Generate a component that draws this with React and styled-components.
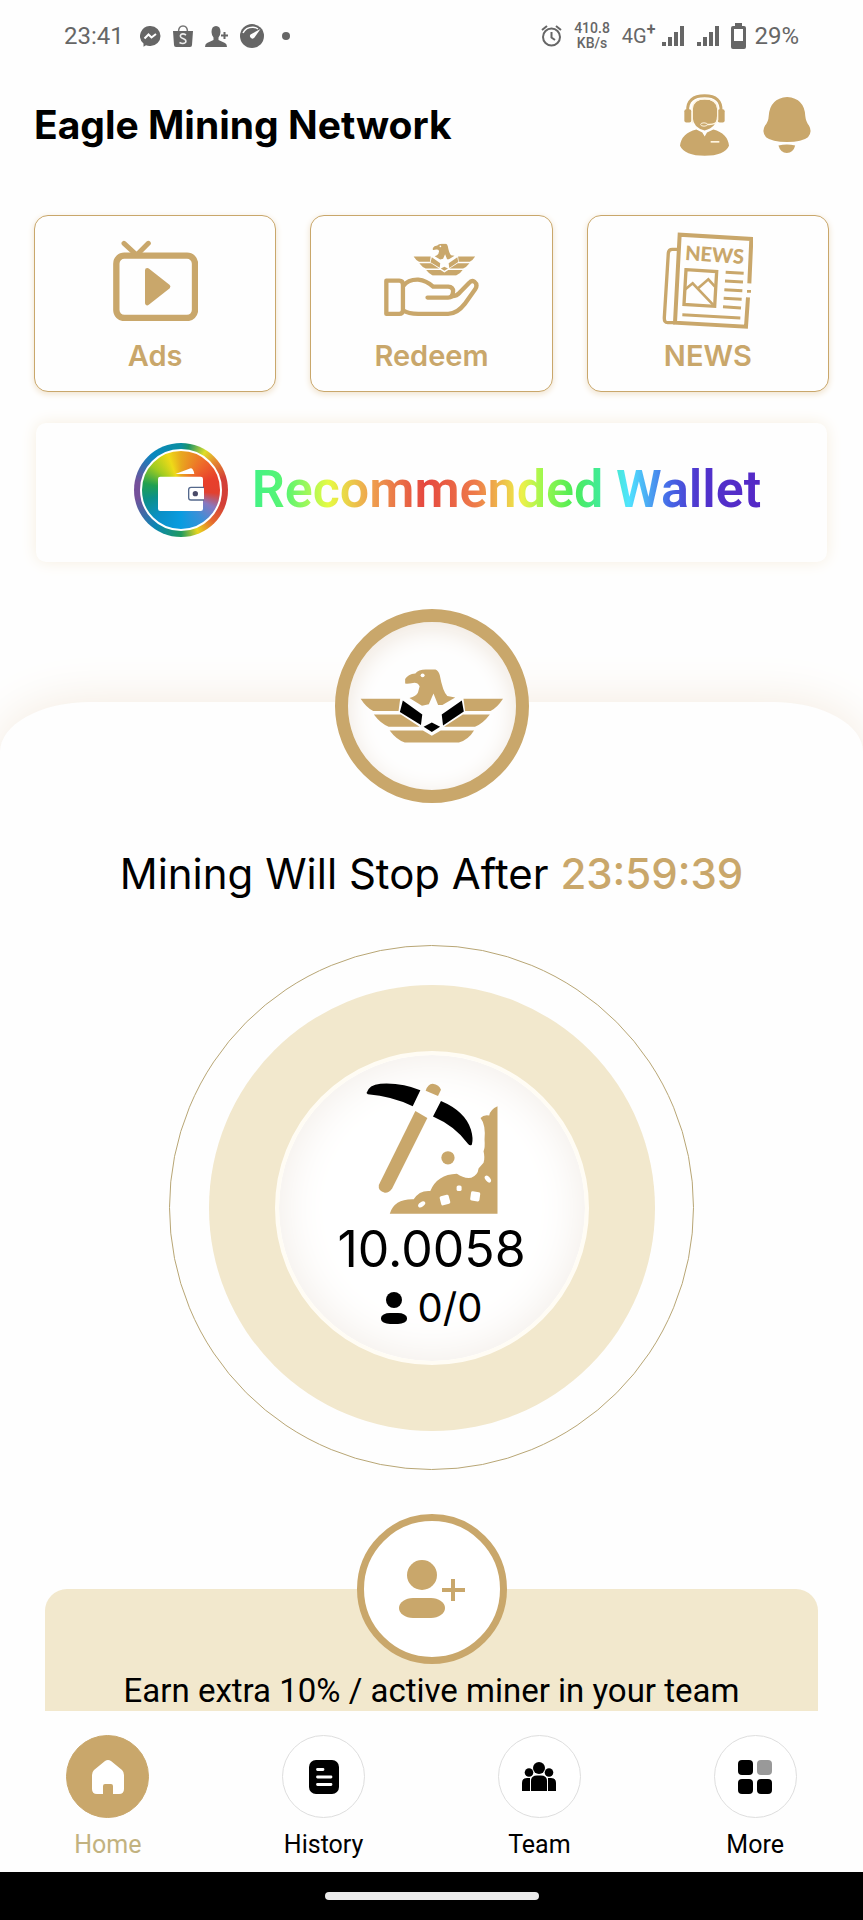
import styled, { createGlobalStyle } from "styled-components";

const App = () => {
    return (
        <Page>
            <GlobalStyle />
            <StatusBar>
                <StatusSide>
                    <span>23:41</span>
                    <StatusApps>
                        <MessengerIcon />
                        <BagIcon />
                        <PersonAddIcon />
                        <GaugeIcon />
                        <Dot />
                    </StatusApps>
                </StatusSide>
                <StatusSide>
                    <AlarmIcon />
                    <Speed>410.8<br />KB/s</Speed>
                    <Network>
                        <NetworkType>4G<sup>+</sup></NetworkType>
                        <Signals>
                            <SignalIcon />
                            <SignalIcon />
                        </Signals>
                    </Network>
                    <Battery>
                        <BatteryIcon />
                        29%
                    </Battery>
                </StatusSide>
            </StatusBar>

            <Content>
                <Header>
                    <Title>Eagle Mining Network</Title>
                    <HeaderButtons>
                        <IconButton aria-label="Support"><SupportIcon /></IconButton>
                        <IconButton aria-label="Notifications"><BellIcon /></IconButton>
                    </HeaderButtons>
                </Header>

                <Shortcuts>
                    <Shortcut><IconBox><TvIcon /></IconBox>Ads</Shortcut>
                    <Shortcut><IconBox><RedeemIcon /></IconBox>Redeem</Shortcut>
                    <Shortcut><IconBox><NewsIcon /></IconBox>NEWS</Shortcut>
                </Shortcuts>

                <WalletBanner href="#wallet">
                    <WalletRing>
                        <WalletDisc><WalletIcon /></WalletDisc>
                    </WalletRing>
                    <WalletText>Recommended Wallet</WalletText>
                </WalletBanner>

                <Sheet>
                    <EagleBadge><EagleIcon width="144" height="76" accent="#000" /></EagleBadge>
                    <Countdown>Mining Will Stop After <Timer>23:59:39</Timer></Countdown>
                    <OuterRing>
                        <MiddleRing>
                            <Core>
                                <PickaxeIcon />
                                <Balance>10.0058</Balance>
                                <Miners><MinerIcon />0/0</Miners>
                            </Core>
                        </MiddleRing>
                    </OuterRing>
                    <TeamCard>
                        <TeamBadge><InviteIcon /></TeamBadge>
                        <TeamText>Earn extra 10% / active miner in your team</TeamText>
                    </TeamCard>
                </Sheet>
            </Content>

            <TabBar>
                <Tab href="#home" $active><TabCircle $active><HomeIcon /></TabCircle>Home</Tab>
                <Tab href="#history"><TabCircle><HistoryIcon /></TabCircle>History</Tab>
                <Tab href="#team"><TabCircle><TeamIcon /></TabCircle>Team</Tab>
                <Tab href="#more"><TabCircle><MoreIcon /></TabCircle>More</Tab>
            </TabBar>
            <GestureBar><GesturePill /></GestureBar>
        </Page>
    )
}

// Status bar icons
const MessengerIcon = () => (
    <svg width="21" height="21" viewBox="0 0 21 21">
        <path fill="#666" d="M10.500 0A10 10 0 0 1 10.500 20Q8 20.200 6 19.300L3.500 20.700V17.500A10 10 0 0 1 10.500 0Z" />
        <path fill="none" stroke="#fff" strokeWidth="2" d="M4.500 12.500L8.500 8.500L11.500 11.500L16 8" />
    </svg>
)

const BagIcon = () => (
    <svg width="20" height="22" viewBox="0 0 20 22">
        <path fill="none" stroke="#777" strokeWidth="1.500" d="M5.500 7Q5.500 1 10 1Q14.500 1 14.500 7" />
        <path fill="#666" d="M0 6H20L19 20Q19 22 17 22H3Q1 22 1 20Z" />
        <path fill="none" stroke="#eee" strokeWidth="1.600" d="M13 10Q10 8 8 9.500Q6 12 10 13.500Q14 15 12.500 17.500Q10 19.500 6.500 17.500" />
    </svg>
)

const PersonAddIcon = () => (
    <svg width="23" height="21" viewBox="0 0 23 21">
        <path fill="#666" d="M11 0Q15.500 0 15.500 6Q15.500 9 13.500 11.500V14L20 17Q22 18 22 21H0Q0 18 2 17L8.500 14V11.500Q6.500 9 6.500 6Q6.500 0 11 0Z" />
        <path stroke="#666" strokeWidth="2" d="M19.500 6V13M16 9.500H23" />
    </svg>
)

const GaugeIcon = () => (
    <svg width="24" height="24" viewBox="0 0 24 24">
        <circle cx="12" cy="12" r="12" fill="#666" />
        <path fill="none" stroke="#fff" strokeWidth="1.500" d="M3 9Q6 3 13 3.200Q16 3.500 18 5" />
        <path fill="#fff" d="M20.500 5L14.500 13.500A2.500 2.500 0 1 1 10.500 10.500Z" />
    </svg>
)

const AlarmIcon = () => (
    <svg width="21" height="22" viewBox="0 0 21 22" fill="none" stroke="#666" strokeWidth="2">
        <circle cx="10.500" cy="12" r="8.500" />
        <path d="M10.500 7V12.500L14 15M1 5L6 1M15 1L20 5" />
    </svg>
)

const SignalIcon = () => (
    <svg width="22" height="20" viewBox="0 0 22 20" fill="#666">
        <path d="M0 16H4V20H0ZM6 11H10V20H6ZM12 6H16V20H12ZM18 0H22V20H18Z" />
    </svg>
)

const BatteryIcon = () => (
    <svg width="15" height="26" viewBox="0 0 15 26">
        <path fill="#666" d="M4 0H11V3H13Q15 3 15 5V24Q15 26 13 26H2Q0 26 0 24V5Q0 3 2 3H4Z" />
        <path fill="#fff" d="M3 6H12V18H3Z" />
    </svg>
)

// Header icons
const SupportIcon = () => (
    <svg width="49" height="62" viewBox="748 275 147 185">
        <path fill="none" stroke="#c9a76b" strokeWidth="9" d="M771 325Q769 280 822 280Q873 280 871 325" />
        <rect x="761" y="320" width="21" height="40" rx="6" fill="#c9a76b" />
        <rect x="861" y="320" width="21" height="40" rx="6" fill="#c9a76b" />
        <path fill="#c9a76b" d="M786 318Q788 291 822 291Q856 291 859 318V340Q858 376 822 384Q788 376 786 345Z" />
        <path fill="none" stroke="#fff5e0" strokeWidth="4" d="M785 362V318Q788 289 822 289Q858 289 861 318V352Q858 365 835 366H828" />
        <ellipse cx="820" cy="366" rx="10" ry="5" fill="#c9a76b" stroke="#fff5e0" strokeWidth="3" />
        <path fill="#c9a76b" d="M748 430Q752 392 797 381L815 390L822 402L829 390L848 381Q891 392 895 430Q882 460 822 460Q762 460 748 430Z" />
        <path stroke="#fff5e0" strokeWidth="5" d="M840 418H866" />
    </svg>
)

const BellIcon = () => (
    <svg width="48" height="56" viewBox="998 293 143 167" fill="#c9a76b">
        <path d="M1070 293Q1122 297 1124 350Q1126 368 1135 378Q1146 398 1132 413Q1115 427 1070 427Q1024 427 1007 413Q993 398 1004 378Q1014 368 1015 350Q1018 297 1070 293Z" />
        <path d="M1044 438Q1069 432 1094 438Q1088 460 1069 460Q1050 460 1044 438Z" />
    </svg>
)

// The eagle is shared by the badge and the redeem shortcut
const EagleIcon = ({ accent, ...rest }) => (
    <svg viewBox="175 233 437 226" {...rest}>
        <path fill="#c9a76b" d="M312 264Q320 249 343 247Q352 235 375 235H404Q413 238 417 252Q426 302 440 316L464 320L425 343H412L398 308L384 341L363 345L325 322Q346 316 351 305L356 286Q350 274 336 276Q322 279 312 278Z" />
        <circle cx="365" cy="253" r="6" fill="#fff" />
        <path fill="#c9a76b" d="M177 324H297L292 361H215Q195 352 177 324ZM609 324H489L494 361H571Q591 352 609 324Z" />
        <path fill="#c9a76b" d="M217 372H299L356 409H262Q238 400 217 372ZM569 372H487L430 409H524Q548 400 569 372Z" />
        <path fill="#c9a76b" d="M265 420H366L393 436L420 420H521Q505 447 475 457H311Q285 447 265 420Z" />
        <path fill={accent} d="M305 329L364 372L360 404L296 364ZM484 329L490 363L427 405L423 372ZM393 396L418 409L393 425L368 409Z" />
    </svg>
)

// Shortcut icons
const TvIcon = () => (
    <svg width="85" height="81" viewBox="337 120 255 243" stroke="#c9a76b" strokeLinecap="round" strokeLinejoin="round">
        <rect x="347" y="167" width="236" height="187" rx="24" fill="none" strokeWidth="19" />
        <path fill="none" strokeWidth="15" d="M370 130L408 165L443 130" />
        <path fill="#c9a76b" strokeWidth="14" d="M440 211L502 260L440 309Z" />
    </svg>
)

const RedeemIcon = () => (
    <svg width="95" height="74" viewBox="42 37 286 222">
        <EagleIcon x="130" y="38" width="188" height="97" accent="#c9a76b" />
        <g fill="none" stroke="#c9a76b" strokeWidth="13" strokeLinecap="round" strokeLinejoin="round">
            <path d="M49 150H88Q99 150 99 162V238Q99 250 88 250H49Z" />
            <path d="M100 166Q115 146 145 147Q170 150 190 168H235Q250 169 250 182Q249 201 235 201H173" />
            <path d="M246 197Q262 196 270 186L298 157Q306 147 314 153Q325 162 317 175L285 220Q262 250 235 250H145Q115 250 100 240" />
        </g>
    </svg>
)

const NewsIcon = () => (
    <svg width="91" height="97" viewBox="697 94 273 291" fill="none" stroke="#c9a76b">
        <path strokeWidth="12" d="M959 248L965 115L750 102L736 366L949 378L955 290M958 268V276" />
        <path strokeWidth="10" d="M744 146H728Q717 146 716 157L704 350Q703 366 714 366H736" />
        <text x="765" y="178" transform="rotate(4 765 178)" fill="#c9a76b" stroke="none" fontFamily="Lato, Roboto, sans-serif" fontWeight="900" fontSize="60">NEWS</text>
        <path strokeWidth="10" d="M769 207L861 213L855 317L763 311Z" />
        <path strokeWidth="8" d="M767 266L789 248L850 312M806 262L836 236L856 258" />
        <path strokeWidth="9" d="M888 215L942 218M886 241L940 244M884 267L938 270M882 293L936 296M880 318L934 322M758 342L932 352" />
    </svg>
)

const WalletIcon = () => (
    <svg width="46" height="43" viewBox="108 111 138 129">
        <path fill="#fff" d="M160 129L206 112Q214 112 217 129Z" />
        <rect x="108" y="137" width="135" height="103" rx="7" fill="#fff" />
        <rect x="200" y="169" width="50" height="38" rx="7" fill="#fff" stroke="#54688c" strokeWidth="4" />
        <circle cx="220" cy="188" r="8" fill="#4a4a68" />
    </svg>
)

const PickaxeIcon = () => (
    <svg width="132" height="131" viewBox="102 95 396 394">
        <path d="M103 125Q110 100 145 97Q210 93 265 117L242 165Q180 135 107 129Z" />
        <path d="M327 149Q400 180 417 235Q425 262 420 280Q415 286 408 278Q370 225 303 196Z" />
        <g fill="#c9a76b">
            <path d="M281 118Q287 98 302 97Q322 100 327 115L318 134Z" />
            <path d="M250 179L286 200L180 412Q170 426 158 425Q137 420 140 402Z" />
            <circle cx="348" cy="320" r="20" />
            <path d="M497 165V488H173Q187 443 245 445Q262 417 295 420Q315 370 375 368Q395 383 418 380Q438 372 440 352L455 335Q460 320 455 300Q460 290 458 265Q462 220 446 200Q455 190 472 193Q475 175 497 165Z" />
        </g>
        <g fill="#fff">
            <rect x="325" y="433" width="28" height="28" rx="5" transform="rotate(-15 339 447)" />
            <rect x="416" y="422" width="28" height="28" rx="5" transform="rotate(8 430 436)" />
            <rect x="374" y="403" width="15" height="17" rx="5" />
            <ellipse cx="269" cy="460" rx="12" ry="7" transform="rotate(-35 269 460)" />
            <ellipse cx="468" cy="384" rx="12" ry="7" transform="rotate(50 468 384)" />
        </g>
    </svg>
)

const MinerIcon = () => (
    <svg width="26" height="32" viewBox="0 0 26 32">
        <circle cx="13" cy="8" r="8" />
        <rect y="21" width="26" height="11" rx="9" ry="5" />
    </svg>
)

const InviteIcon = () => (
    <svg width="66" height="58" viewBox="0 0 66 58" fill="#c9a76b">
        <circle cx="23" cy="15" r="15" />
        <rect y="38" width="46" height="20" rx="14" ry="10" />
        <path d="M52 19H56V28H66V32H56V41H52V32H43V28H52Z" />
    </svg>
)

// Tab bar icons
const HomeIcon = () => (
    <svg width="32" height="34" viewBox="0 0 32 34">
        <path fill="#fff" d="M13 1Q16 -1 19 1L30 10Q32 12 32 15V29Q32 34 27 34H21V26Q21 24 19 24H13Q11 24 11 26V34H5Q0 34 0 29V15Q0 12 2 10Z" />
    </svg>
)

const HistoryIcon = () => (
    <svg width="30" height="34" viewBox="0 0 30 34">
        <rect width="30" height="34" rx="7" />
        <path stroke="#fff" strokeWidth="2.800" strokeLinecap="round" d="M8.500 9.500H14M8.500 17H22M8.500 24.500H22" />
    </svg>
)

const TeamIcon = () => (
    <svg width="34" height="30" viewBox="0 0 34 30">
        <circle cx="17" cy="6" r="6" />
        <circle cx="7" cy="10.500" r="4.300" />
        <circle cx="27" cy="10.500" r="4.300" />
        <path d="M9 29V19Q9 13.500 15 13.500H19Q25 13.500 25 19V29ZM8 29H0V21Q0 16 5 16H8ZM26 29V16H29Q34 16 34 21V29Z" />
    </svg>
)

const MoreIcon = () => (
    <svg width="34" height="34" viewBox="0 0 34 34">
        <rect width="15" height="15" rx="4" />
        <rect x="19" width="15" height="15" rx="4" fill="#999" />
        <rect y="19" width="15" height="15" rx="4" />
        <rect x="19" y="19" width="15" height="15" rx="4" />
    </svg>
)

const GlobalStyle = createGlobalStyle`
  :root {
    --gold: #c9a76b;
    --cream: #f2e8cd;
    --white: #fefefe;
    --display: Inter, Roboto, sans-serif;
  }
  * {
    box-sizing: border-box;
  }
  body {
    margin: 0;
    background-color: var(--white);
    font-family: Roboto, sans-serif;
  }
  svg {
    display: block;
    flex-shrink: 0;
  }
`

const Page = styled.div`
  display: flex;
  flex-direction: column;
  height: 100vh;
  color: black;
`

const StatusBar = styled.div`
  display: flex;
  justify-content: space-between;
  align-items: center;
  flex-shrink: 0;
  height: 72px;
  padding: 0 64px;
  color: #666;
  font-size: 24px;
`

const StatusSide = styled.div`
  display: flex;
  align-items: center;
  gap: 12px;
`

const StatusApps = styled.div`
  display: flex;
  align-items: center;
  gap: 12px;
  margin-left: 4px;
`

const Dot = styled.span`
  width: 8px;
  height: 8px;
  margin-left: 6px;
  border-radius: 50%;
  background-color: #666;
`

const Speed = styled.span`
  font-size: 14px;
  line-height: 15px;
  font-weight: 500;
  text-align: center;
`

const Network = styled.div`
  display: flex;
  align-items: center;
  gap: 7px;
`

const NetworkType = styled.span`
  font-size: 20px;
  line-height: 24px;
  sup {
    font-size: 16px;
    line-height: 0;
    font-weight: 700;
  }
`

const Signals = styled.div`
  display: flex;
  gap: 13px;
`

const Battery = styled.div`
  display: flex;
  align-items: center;
  gap: 8px;
`

const Content = styled.main`
  flex: 1;
  min-height: 0;
  overflow-x: hidden;
  overflow-y: auto;
  scrollbar-width: none;
`

const Header = styled.header`
  display: flex;
  justify-content: space-between;
  align-items: center;
  height: 106px;
  padding: 0 52px 0 34px;
`

const Title = styled.h1`
  margin: 0;
  font-family: var(--display);
  font-size: 39px;
  line-height: 48px;
  font-weight: 700;
`

const HeaderButtons = styled.div`
  display: flex;
  align-items: center;
  gap: 34px;
`

const IconButton = styled.button`
  padding: 0;
  border: none;
  background: none;
  cursor: pointer;
`

const Shortcuts = styled.div`
  display: grid;
  grid-template-columns: repeat(3, 1fr);
  gap: 34px;
  padding: 37px 34px 0;
`

const Shortcut = styled.button`
  display: flex;
  flex-direction: column;
  align-items: center;
  gap: 3px;
  height: 177px;
  padding: 9px 0 0;
  border: 1px solid var(--gold);
  border-radius: 14px;
  background-color: var(--white);
  box-shadow: 0 2px 6px #f0e2cc;
  color: var(--gold);
  font-family: var(--display);
  font-size: 29px;
  line-height: 36px;
  font-weight: 600;
  cursor: pointer;
`

const IconBox = styled.span`
  display: flex;
  justify-content: center;
  align-items: center;
  height: 110px;
`

const WalletBanner = styled.a`
  display: flex;
  justify-content: center;
  align-items: center;
  gap: 24px;
  height: 139px;
  margin: 31px 36px 0;
  padding: 0 0 6px 32px;
  border-radius: 10px;
  background-color: var(--white);
  box-shadow: 0 0 16px #f7efe0;
  text-decoration: none;
`

const WalletRing = styled.span`
  display: flex;
  justify-content: center;
  align-items: center;
  width: 94px;
  height: 94px;
  border-radius: 50%;
  background: conic-gradient(#0b8fa0, #1c9468 10deg, #dede28 32deg, #e58a30 50deg, #d33f38 75deg, #d33f38 110deg, #e5692e 135deg, #e8d51e 158deg, #1f9a60 180deg, #0a86b4 215deg, #74509a 260deg, #74509a 280deg, #0a86c0 320deg, #0b8fa0);
`

const WalletDisc = styled.span`
  display: flex;
  justify-content: center;
  align-items: center;
  width: 82px;
  height: 82px;
  border: 2px solid white;
  border-radius: 50%;
  background: conic-gradient(#e8a81e, #ee6a2a 40deg, #e8402c 70deg, #e3402e 95deg, #8878c0 118deg, #3a90d8 145deg, #0a9ce0 180deg, #0a90c8 220deg, #0c9088 255deg, #20a050 280deg, #a0cc20 310deg, #eeda18 340deg, #e8a81e);
`

const WalletText = styled.span`
  font-size: 52px;
  line-height: 60px;
  font-weight: 600;
  color: transparent;
  background: linear-gradient(90deg, #41f287, #5df570 7%, #e6fb43 15%, #efa44f 23%, #e5473f 34%, #ee7c4a 44%, #eef04a 53%, #a0f84e 57%, #4dec55 63%, #40eba0 69%, #50e4ff 74%, #4567e6 82%, #5033cc 88%, #5528c6);
  background-clip: text;
  -webkit-background-clip: text;
`

const Sheet = styled.section`
  display: flex;
  flex-direction: column;
  align-items: center;
  margin-top: 140px;
  border-radius: 90px 90px 0 0 / 50px 50px 0 0;
  background-color: var(--white);
  box-shadow: 0 0 50px #f5ebdf;
`

const EagleBadge = styled.div`
  display: flex;
  justify-content: center;
  align-items: center;
  width: 194px;
  height: 194px;
  margin-top: -93px;
  border: 13px solid var(--gold);
  border-radius: 50%;
  background-color: var(--white);
  box-shadow: inset 0 6px 24px #efe6dc;
`

const Countdown = styled.p`
  margin: 45px 0;
  font-family: var(--display);
  font-size: 42px;
  line-height: 52px;
  text-align: center;
`

const Timer = styled.span`
  color: var(--gold);
  font-weight: 500;
`

const OuterRing = styled.div`
  display: flex;
  justify-content: center;
  align-items: center;
  width: 525px;
  height: 525px;
  border: 1px solid #b8a675;
  border-radius: 50%;
`

const MiddleRing = styled.div`
  display: flex;
  justify-content: center;
  align-items: center;
  width: 446px;
  height: 446px;
  border-radius: 50%;
  background-color: var(--cream);
`

const Core = styled.div`
  display: flex;
  flex-direction: column;
  align-items: center;
  width: 314px;
  height: 314px;
  padding-top: 28px;
  border: 4px solid #fffcf4;
  border-radius: 50%;
  background-color: white;
  box-shadow: inset 0 0 48px #f1ebe5;
`

const Balance = styled.strong`
  margin-top: 6px;
  font-family: var(--display);
  font-size: 50px;
  line-height: 58px;
  font-weight: 400;
`

const Miners = styled.span`
  display: flex;
  align-items: center;
  gap: 11px;
  margin-top: 10px;
  font-family: var(--display);
  font-size: 40px;
  line-height: 40px;
`

const TeamCard = styled.div`
  display: flex;
  flex-direction: column;
  align-items: center;
  align-self: stretch;
  margin: 119px 45px 0;
  padding-bottom: 24px;
  border-radius: 22px 22px 0 0;
  background-color: var(--cream);
`

const TeamBadge = styled.div`
  display: flex;
  justify-content: center;
  align-items: center;
  width: 150px;
  height: 150px;
  margin-top: -75px;
  border: 7px solid var(--gold);
  border-radius: 50%;
  background-color: white;
`

const TeamText = styled.p`
  margin: 9px 0 0;
  font-size: 33px;
  line-height: 36px;
  text-align: center;
`

const TabBar = styled.nav`
  display: grid;
  grid-template-columns: repeat(4, 1fr);
  flex-shrink: 0;
  height: 161px;
  padding-top: 24px;
  background-color: var(--white);
`

const Tab = styled.a`
  display: flex;
  flex-direction: column;
  align-items: center;
  gap: 12px;
  color: ${(props) => (props.$active ? "#c2b280" : "black")};
  font-size: 25px;
  line-height: 30px;
  text-decoration: none;
`

const TabCircle = styled.span`
  display: flex;
  justify-content: center;
  align-items: center;
  width: 83px;
  height: 83px;
  border: 1px solid ${(props) => (props.$active ? "var(--gold)" : "#dedede")};
  border-radius: 50%;
  background-color: ${(props) => (props.$active ? "var(--gold)" : "white")};
`

const GestureBar = styled.div`
  display: flex;
  justify-content: center;
  align-items: center;
  flex-shrink: 0;
  height: 48px;
  background-color: black;
`

const GesturePill = styled.div`
  width: 214px;
  height: 8px;
  border-radius: 4px;
  background-color: #ebebeb;
`

export default App;
